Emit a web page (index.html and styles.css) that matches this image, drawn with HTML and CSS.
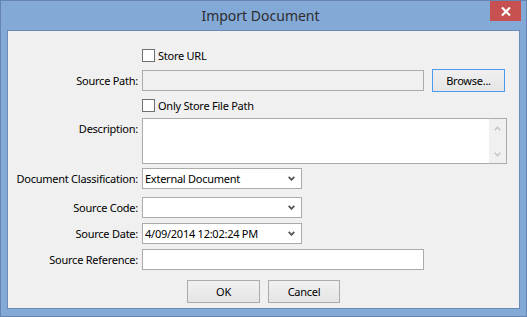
FILE: index.html
```html
<!DOCTYPE html>
<html>
<head>
<meta charset="utf-8">
<link rel="stylesheet" href="styles.css">
</head>
<body>
<div class="window">
  <div class="titlebar">
    <span class="title">Import Document</span>
    <div class="close">
      <svg width="10" height="9" viewBox="0 0 10 9"><path d="M1 0.5 L9 8.5 M9 0.5 L1 8.5" stroke="#fff" stroke-width="2.2"/></svg>
    </div>
  </div>
  <div class="client">
    <div class="row r1">
      <div class="label"></div>
      <label class="check"><span class="box"></span><span>Store URL</span></label>
    </div>
    <div class="row r2">
      <div class="label">Source Path:</div>
      <div class="input disabled path"></div>
      <div class="btn browse">Browse...</div>
    </div>
    <div class="row r3">
      <div class="label"></div>
      <label class="check"><span class="box"></span><span>Only Store File Path</span></label>
    </div>
    <div class="row r4">
      <div class="label top">Description:</div>
      <div class="input textarea">
        <div class="vscroll">
          <svg width="7" height="5" viewBox="0 0 7 5"><path d="M0.7 4.3 L3.5 1.3 L6.3 4.3" fill="none" stroke="#c4c4c4" stroke-width="1.6"/></svg>
          <svg width="7" height="5" viewBox="0 0 7 5"><path d="M0.7 0.7 L3.5 3.7 L6.3 0.7" fill="none" stroke="#c4c4c4" stroke-width="1.6"/></svg>
        </div>
      </div>
    </div>
    <div class="row r5">
      <div class="label">Document Classification:</div>
      <div class="input select"><span>External Document</span><svg class="arrow" width="7" height="5" viewBox="0 0 7 5"><path d="M0.7 0.8 L3.5 3.8 L6.3 0.8" fill="none" stroke="#555" stroke-width="1.8"/></svg></div>
    </div>
    <div class="row r6">
      <div class="label">Source Code:</div>
      <div class="input select"><span></span><svg class="arrow" width="7" height="5" viewBox="0 0 7 5"><path d="M0.7 0.8 L3.5 3.8 L6.3 0.8" fill="none" stroke="#555" stroke-width="1.8"/></svg></div>
    </div>
    <div class="row r7">
      <div class="label">Source Date:</div>
      <div class="input select"><span>4/09/2014 12:02:24 PM</span><svg class="arrow" width="7" height="5" viewBox="0 0 7 5"><path d="M0.7 0.8 L3.5 3.8 L6.3 0.8" fill="none" stroke="#555" stroke-width="1.8"/></svg></div>
    </div>
    <div class="row r8">
      <div class="label">Source Reference:</div>
      <div class="input path"></div>
    </div>
    <div class="buttons">
      <div class="btn ok">OK</div>
      <div class="btn cancel">Cancel</div>
    </div>
  </div>
</div>
</body>
</html>
```
FILE: styles.css
```css
html, body {
  margin: 0;
  padding: 0;
  background: #83a9d6;
}
body {
  font-family: "Noto Sans", "Open Sans", sans-serif;
  font-size: 11px;
  letter-spacing: -0.25px;
  color: #000;
}
.window {
  width: 527px;
  height: 317px;
  box-sizing: border-box;
  border: 1px solid #6585b0;
  background: #83a9d6;
  padding: 0 6px 7px 6px;
  display: flex;
  flex-direction: column;
  position: relative;
}
.titlebar {
  height: 29px;
  display: flex;
  align-items: center;
  justify-content: center;
}
.title {
  font-size: 14px;
  letter-spacing: 0;
  color: #2e2e2e;
  margin-left: -6px;
}
.close {
  position: absolute;
  top: 0;
  right: 5px;
  width: 31px;
  height: 20px;
  background: #c75050;
  display: flex;
  align-items: center;
  justify-content: center;
}
.client {
  flex: 1;
  border: 1px solid #6a8bb8;
  background: #f0f0f0;
  padding-top: 18px;
}
.row {
  display: flex;
  align-items: center;
}
.label {
  width: 130px;
  padding-right: 4px;
  text-align: right;
  flex: none;
  white-space: nowrap;
}
.label.top {
  align-self: flex-start;
  padding-top: 3px;
}
.r1 { height: 13px; }
.r2 { height: 23px; margin-top: 7px; }
.r3 { height: 13px; margin-top: 7px; }
.r4 { height: 46px; margin-top: 6px; }
.r5 { height: 21px; margin-top: 4px; }
.r6 { height: 21px; margin-top: 8px; }
.r7 { height: 21px; margin-top: 5px; }
.r8 { height: 21px; margin-top: 5px; }
.check {
  display: flex;
  align-items: center;
  gap: 3px;
  height: 13px;
}
.box {
  width: 11px;
  height: 11px;
  border: 1px solid #707070;
  background: #fff;
}
.input {
  box-sizing: border-box;
  border: 1px solid #ababab;
  background: #fff;
  height: 21px;
}
.input.disabled {
  background: #f0f0f0;
}
.path {
  width: 282px;
}
.browse {
  margin-left: 8px;
  width: 73px;
  border-color: #4a9af0 !important;
}
.textarea {
  width: 365px;
  height: 46px;
  display: flex;
  justify-content: flex-end;
}
.vscroll {
  width: 17px;
  background: #f0f0f0;
  display: flex;
  flex-direction: column;
  justify-content: space-between;
  align-items: center;
  padding: 7px 0 6px 0;
}
.vscroll svg { display: block; }
.select {
  width: 160px;
  display: flex;
  align-items: center;
  justify-content: space-between;
  padding: 0 6px 0 2px;
}
.select .arrow { display: block; }
.btn {
  box-sizing: border-box;
  height: 23px;
  border: 1px solid #acacac;
  background: linear-gradient(#f0f0f0, #e5e5e5);
  display: flex;
  align-items: center;
  justify-content: center;
}
.buttons {
  display: flex;
  gap: 8px;
  margin-top: 10px;
  padding-left: 179px;
}
.ok { width: 73px; }
.cancel { width: 72px; }
```
